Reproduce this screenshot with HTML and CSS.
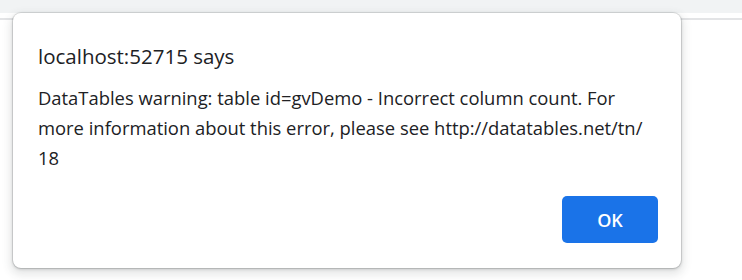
FILE: index.html
```html
<!DOCTYPE html>
<html>
<head>
<meta charset="utf-8">
<link rel="stylesheet" href="styles.css">
</head>
<body>
<div class="toolbar"></div>
<div class="rule"></div>
<div class="dialog">
  <div class="title">localhost:52715 says</div>
  <div class="message">DataTables warning: table id=gvDemo - Incorrect column count. For<br>more information about this error, please see http://datatables.net/tn/<br>18</div>
  <div class="actions"><button class="ok">OK</button></div>
</div>
</body>
</html>
```
FILE: styles.css
```css
html, body {
  margin: 0;
  padding: 0;
  background: #ffffff;
  width: 742px;
  height: 280px;
  overflow: hidden;
  font-family: "Open Sans", "Noto Sans", sans-serif;
  color: #202124;
}
.toolbar {
  height: 13px;
  background: #f1f3f4;
}
.rule {
  margin-top: 5px;
  height: 2px;
  background: #e3e4e6;
}
.dialog {
  position: absolute;
  left: 13px;
  top: 13px;
  width: 668px;
  height: 255px;
  box-sizing: border-box;
  background: #ffffff;
  border-radius: 8px;
  box-shadow: 0 0 0 1px rgba(60,64,67,0.12), 0 1px 3px rgba(60,64,67,0.3), 0 4px 8px 3px rgba(60,64,67,0.12);
  padding: 28px 23px 25px 25px;
  display: flex;
  flex-direction: column;
}
.title {
  font-size: 20.5px;
  line-height: 30px;
  white-space: nowrap;
}
.message {
  margin-top: 12px;
  font-size: 18.4px;
  line-height: 30px;
  white-space: nowrap;
}
.actions {
  margin-top: auto;
  display: flex;
  justify-content: flex-end;
}
.ok {
  width: 96px;
  height: 47px;
  border: none;
  border-radius: 5px;
  background: #1a73e8;
  color: #ffffff;
  font-family: "Open Sans", "Noto Sans", sans-serif;
  font-weight: 600;
  font-size: 18px;
  padding: 0;
}
```
